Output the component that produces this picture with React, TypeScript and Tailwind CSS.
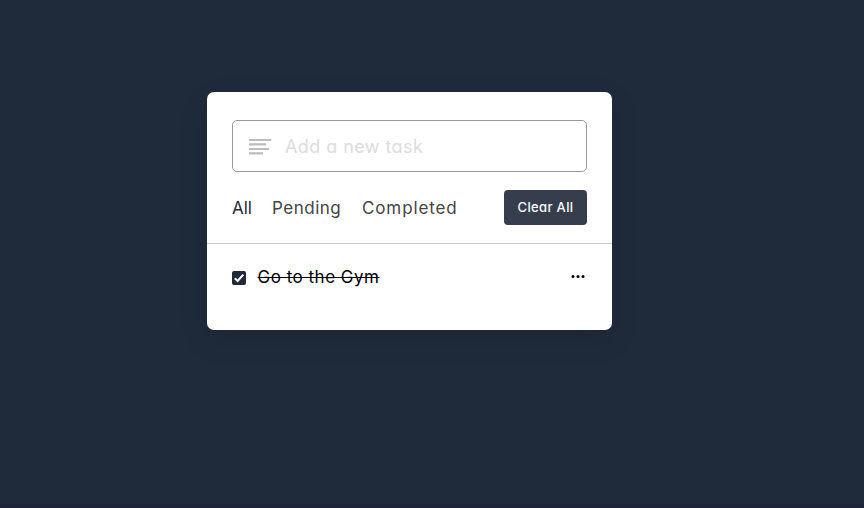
import React, { useState } from "react";

type Filter = "All" | "Pending" | "Completed";

const filters: { name: Filter; style: string }[] = [
  { name: "All", style: "w-[20px] tracking-[-0.1px]" },
  { name: "Pending", style: "w-[70px] tracking-[0.5px]" },
  { name: "Completed", style: "w-[96px] tracking-[0.88px]" },
];

function BarsIcon() {
  return (
    <svg width="23" height="17" viewBox="0 0 23 17" fill="#bcbcbc" aria-hidden="true">
      <rect x="0" y="1" width="22.3" height="2" />
      <rect x="0" y="5.2" width="17.2" height="2.3" />
      <rect x="0" y="10" width="20.2" height="2" />
      <rect x="0" y="14.2" width="14" height="2.3" />
    </svg>
  );
}

function Checkbox({ checked, onClick }: { checked: boolean; onClick: () => void }) {
  return (
    <button
      type="button"
      aria-pressed={checked}
      onClick={onClick}
      className="mt-px flex h-[14px] w-[14px] items-center justify-center rounded-[2px] bg-[#1f293a]"
    >
      {checked && (
        <svg width="14" height="14" viewBox="0 0 14 14" fill="none" stroke="#fff" strokeWidth="2.1">
          <path d="M2.8 7.2 5.6 9.9 11.3 3.6" />
        </svg>
      )}
    </button>
  );
}

export default function App() {
  const [active, setActive] = useState<Filter>("All");
  const [done, setDone] = useState(true);

  return (
    <div className="flex h-[508px] w-[864px] flex-col overflow-hidden bg-[#1f2a3b] font-['Inter','Noto_Sans',sans-serif] [font-feature-settings:'cv11']">
      <main className="flex-1 pt-[92px] pl-[207px]">
        <section className="h-[238px] w-[405px] rounded-[7px] bg-white pt-7 shadow-[0_10px_30px_rgba(0,0,0,0.1)]">
          <div className="mx-[25px] flex h-[52px] items-center rounded-[5px] border border-[#999] pl-4">
            <BarsIcon />
            <input
              placeholder="Add a new task"
              className="ml-[13px] w-[280px] bg-transparent text-[18px] tracking-[0.42px] outline-none placeholder:text-[#dcdcdc]"
            />
          </div>

          <div className="mt-[18px] flex h-[35px] items-center justify-between px-[25px]">
            <nav className="flex gap-[20px] pt-[2px] text-[17px] leading-[25px]">
              {filters.map(({ name, style }) => (
                <button
                  key={name}
                  type="button"
                  onClick={() => setActive(name)}
                  className={`${style} text-left whitespace-nowrap ${active === name ? "text-[#1f293a]" : "text-[#444]"}`}
                >
                  {name}
                </button>
              ))}
            </nav>
            <button
              type="button"
              className="h-[35px] w-[83px] rounded-[4px] bg-[#363e4e] text-[13px] font-medium tracking-[0.35px] text-white"
            >
              Clear All
            </button>
          </div>

          <div className="mt-[18px] border-t border-[#ccc]" />

          <div className="mt-[20px] flex h-[26px] items-center px-[25px]">
            <Checkbox checked={done} onClick={() => setDone(!done)} />
            <span
              className={`ml-[11.5px] text-[17px] leading-[26px] tracking-[0.5px] text-black ${done ? "line-through" : ""}`}
            >
              Go to the Gym
            </span>
            <svg className="mr-[2px] ml-auto" width="14" height="4" viewBox="0 0 14 4" aria-label="Task options">
              <circle cx="2" cy="1.5" r="1.5" />
              <circle cx="7" cy="1.5" r="1.5" />
              <circle cx="12" cy="1.5" r="1.5" />
            </svg>
          </div>
        </section>
      </main>
      <footer className="h-[4px] bg-[#1f233b]" />
    </div>
  );
}
